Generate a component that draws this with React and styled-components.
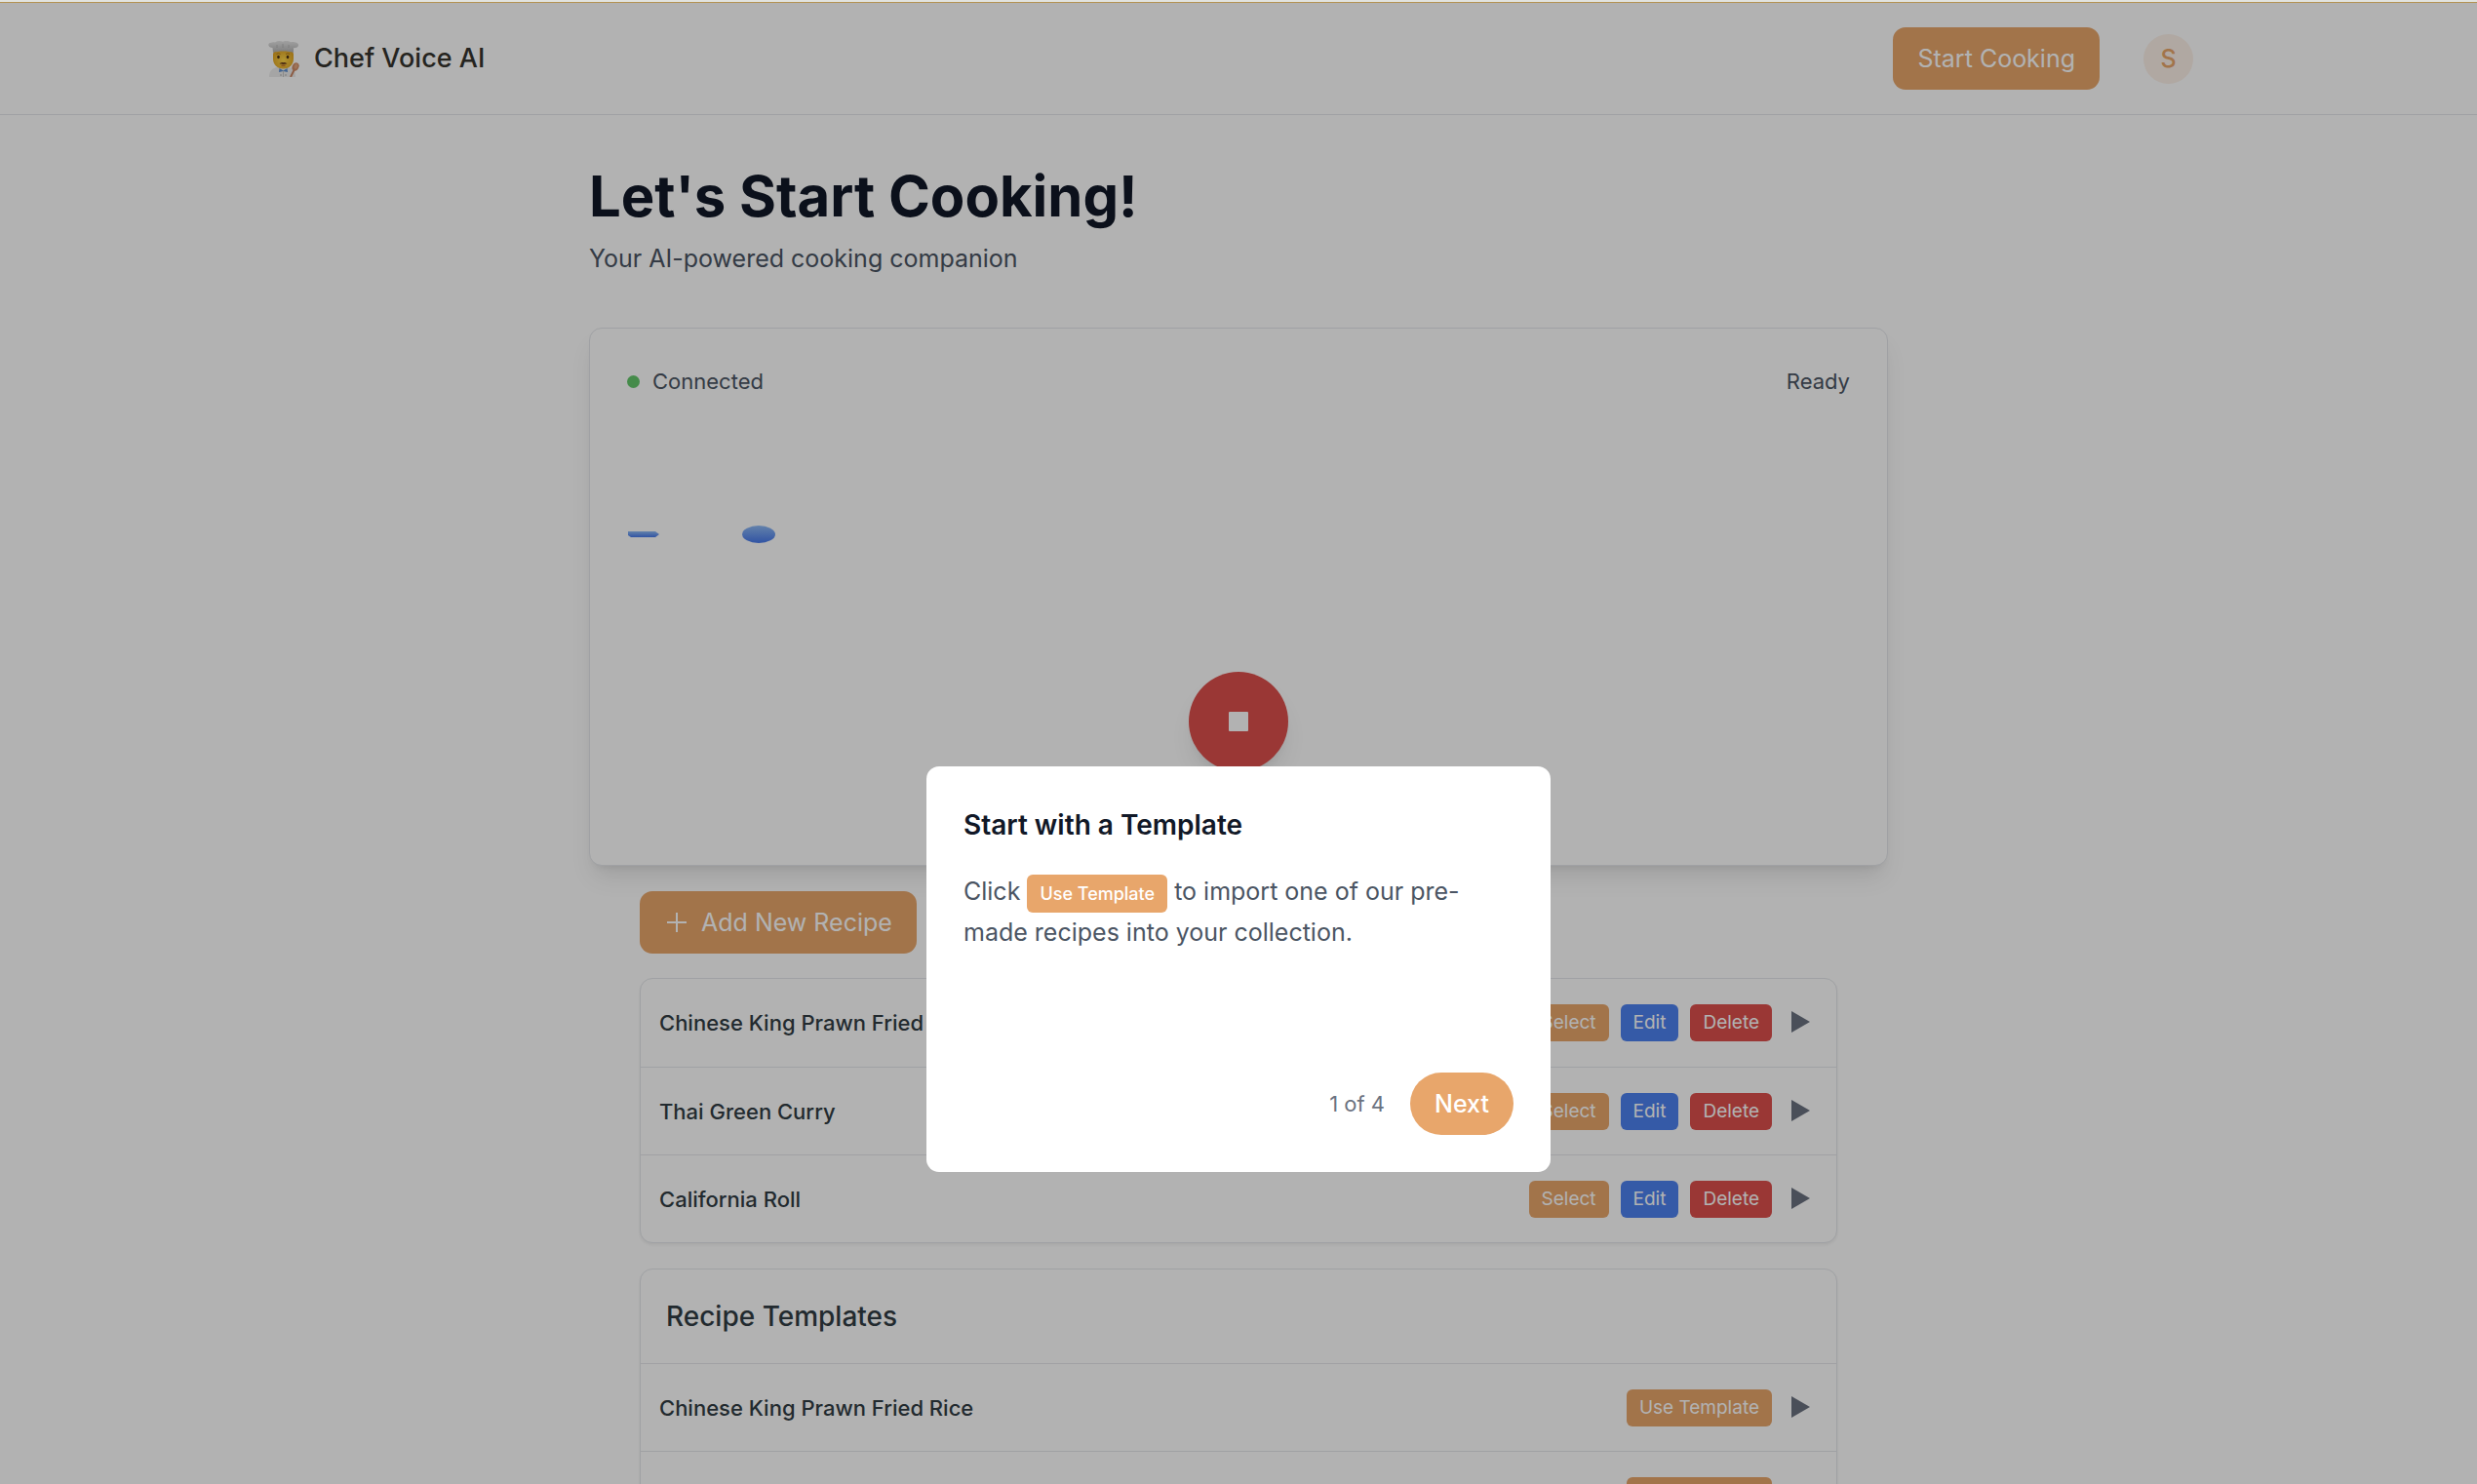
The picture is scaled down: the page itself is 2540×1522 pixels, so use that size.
import React from 'react';
import styled, { createGlobalStyle } from 'styled-components';

const GlobalStyle = createGlobalStyle`
  * {
    box-sizing: border-box;
  }
  body {
    margin: 0;
    background: #fff;
    color: #323d44;
    font-family: Inter, "Liberation Sans", sans-serif;
    font-size: 25px;
    line-height: 38px;
  }
  button {
    border: 0;
    margin: 0;
    font-family: inherit;
    cursor: pointer;
  }
  h1, h2, p, ul {
    margin: 0;
    padding: 0;
  }
`
const Page = styled.div`
  position: relative;
  height: 100vh;
  overflow: hidden;
`
const TopStrip = styled.div`
  position: relative;
  z-index: 20;
  height: 3px;
  background: #e1e3df;
  border-bottom: 1px solid #b39253;
`
const Header = styled.header`
  height: 115px;
  border-bottom: 1px solid #e5e7eb;
`
const HeaderInner = styled.div`
  max-width: 2048px;
  height: 100%;
  margin: 0 auto;
  padding: 0 45px 0 28px;
  display: flex;
  align-items: center;
  justify-content: space-between;
`
const Brand = styled.a`
  display: flex;
  align-items: center;
  gap: 15px;
  font-size: 27px;
  font-weight: 500;
  color: #35342e;
  text-decoration: none;
`
const HeaderActions = styled.div`
  display: flex;
  align-items: center;
  gap: 45px;
`
const Button = styled.button`
  display: inline-flex;
  align-items: center;
  justify-content: center;
  gap: 12px;
  height: 64px;
  padding: 0 25px;
  border-radius: ${props => props.$round ? '32px' : '13px'};
  background: #e8a66b;
  color: #fff;
  font-size: 25px;
  font-weight: ${props => props.$round ? 500 : 400};
`
const Avatar = styled.button`
  width: 51px;
  height: 51px;
  padding: 0;
  border-radius: 50%;
  background: #fdf1e8;
  color: #e8a66b;
  font-size: 25px;
  font-weight: 500;
`
const Main = styled.main`
  max-width: 1332px;
  margin: 0 auto;
  padding-top: 51px;
`
const Title = styled.h1`
  font-size: 58px;
  line-height: 64px;
  font-weight: 700;
  color: #111827;
`
const Subtitle = styled.p`
  margin-top: 13px;
  color: #4b5563;
`
const VoiceCard = styled.section`
  margin-top: 52px;
  padding: 38px 38px 96px;
  border: 1px solid #e5e7eb;
  border-radius: 13px;
  background: #fff;
  box-shadow: 0 16px 24px -5px rgba(0, 0, 0, 0.1), 0 6px 10px -6px rgba(0, 0, 0, 0.1);
  display: flex;
  flex-direction: column;
`
const StatusRow = styled.div`
  display: flex;
  justify-content: space-between;
  font-size: 22px;
  line-height: 32px;
  color: #4b5563;
`
const Status = styled.span`
  display: flex;
  align-items: center;
  gap: 13px;
`
const Dot = styled.span`
  width: 13px;
  height: 13px;
  border-radius: 50%;
  background: #64c86b;
`
const Wave = styled.svg`
  display: block;
  width: 100%;
  height: 230px;
  margin: 26px 0;
`
const StopButton = styled.button`
  width: 102px;
  height: 102px;
  padding: 0;
  align-self: center;
  display: flex;
  align-items: center;
  justify-content: center;
  border-radius: 50%;
  background: #dd504c;
  box-shadow: 0 16px 24px -5px rgba(0, 0, 0, 0.1), 0 6px 10px -6px rgba(0, 0, 0, 0.1);
`
const StopIcon = styled.span`
  width: 20px;
  height: 20px;
  border-radius: 1px;
  background: #fff;
`
const Recipes = styled.section`
  padding: 26px 52px 0;
`
const List = styled.ul`
  margin-top: ${props => props.$gap}px;
  list-style: none;
  border: 1px solid #e5e7eb;
  border-radius: 13px;
  background: #fff;
  box-shadow: 0 2px 3px rgba(0, 0, 0, 0.06);
`
const ListTitle = styled.li`
  height: 96px;
  padding: 0 26px;
  display: flex;
  align-items: center;

  h2 {
    font-size: 28px;
    font-weight: 500;
  }
`
const Row = styled.li`
  height: 90px;
  padding: 0 19px;
  display: flex;
  align-items: center;
  justify-content: space-between;

  & + & , ${ListTitle} + & {
    border-top: 1px solid #e5e7eb;
  }
`
const RecipeName = styled.span`
  font-size: 22px;
  font-weight: 500;
`
const RowActions = styled.div`
  display: flex;
  align-items: center;
  gap: 12px;
`
const colors = {
  orange: '#e8a66b',
  blue: '#4d81f0',
  red: '#dd504c',
}
const SmallButton = styled.button`
  height: 38px;
  padding: 0 13px;
  border-radius: 6px;
  background: ${props => colors[props.$color]};
  color: #fff;
  font-size: 19px;
  line-height: 38px;
`
const ExpandButton = styled.button`
  padding: 0 8px;
  background: none;

  svg {
    display: block;
  }
`
const Overlay = styled.div`
  position: fixed;
  inset: 0;
  z-index: 10;
  display: flex;
  justify-content: center;
  align-items: flex-start;
  background: rgba(0, 0, 0, 0.3);
`
const Dialog = styled.div`
  width: 640px;
  min-height: 416px;
  margin-top: 786px;
  padding: 38px;
  display: flex;
  flex-direction: column;
  border-radius: 13px;
  background: #fff;
`
const DialogTitle = styled.h2`
  font-size: 28px;
  line-height: 44px;
  font-weight: 600;
  color: #111827;
`
const DialogText = styled.p`
  margin-top: 26px;
  line-height: 41px;
  color: #4b5563;
`
const Tag = styled.span`
  display: inline-block;
  height: 39px;
  padding: 0 13px;
  border-radius: 6px;
  background: #e8a66b;
  color: #fff;
  font-size: 18px;
  line-height: 39px;
  font-weight: 500;
  vertical-align: middle;
`
const DialogFooter = styled.div`
  margin-top: auto;
  display: flex;
  align-items: center;
  justify-content: flex-end;
  gap: 26px;
`
const Step = styled.span`
  font-size: 22px;
  color: #6b7280;
`

const ChefIcon = () => (
  <svg width="33" height="37" viewBox="0 0 33 37" aria-hidden="true">
    <defs>
      <linearGradient id="hat" x1="0" y1="0" x2="0" y2="1">
        <stop offset="0" stopColor="#e6e6e6" />
        <stop offset="1" stopColor="#b4b4b4" />
      </linearGradient>
      <radialGradient id="face" cx="0.5" cy="0.55" r="0.6">
        <stop offset="0" stopColor="#ffd84a" />
        <stop offset="1" stopColor="#e0a222" />
      </radialGradient>
    </defs>
    <path d="M2 37c0-6 3-9 8-10h12c5 1 7 4 7 10z" fill="#ececec" />
    <path d="M6 14c0-3 2-5 10.500-5S27 11 27 14v4c0 6-4 10.500-10.500 10.500S6 24 6 18z" fill="url(#face)" />
    <path d="M12.500 28l4 2.500 4-2.500.5 4-4.500-1-4.500 1z" fill="#5d8fd0" />
    <path d="M16.500 31v6" stroke="#c8c8c8" />
    <circle cx="14" cy="35" r="0.700" fill="#999" />
    <circle cx="19" cy="35" r="0.700" fill="#999" />
    <ellipse cx="11.500" cy="16.500" rx="1.300" ry="1.800" fill="#4a2f14" />
    <ellipse cx="21" cy="16.500" rx="1.300" ry="1.800" fill="#4a2f14" />
    <path d="M9.500 13.500q2-1.500 4 0M19 13.500q2-1.500 4 0" stroke="#b07c20" fill="none" />
    <path d="M12.500 23c1.500-.5 2.500-1.500 4-.8 1.500-.7 2.500.3 4 .8-1.500 1.200-6.500 1.200-8 0z" fill="#6b3f1c" />
    <path d="M14.500 25.200h4" stroke="#b5562c" />
    <path d="M6 12L5.500 7C1 7 0 3 3 2c2-1 4-1 5-.5C11-.5 14 0 16 .800c3-1.500 6-1 8 .4 4-.5 8 .8 8 3 0 2-2 3-5 3L27 12c-6-2-15-2-21 0z" fill="url(#hat)" />
    <path d="M10 4v3M16 3v4M22 4v3" stroke="#adadad" strokeWidth="0.800" />
    <path d="M28 29l-4 8" stroke="#c98562" strokeWidth="2" />
    <ellipse cx="29" cy="26.500" rx="3.300" ry="4.300" transform="rotate(25 29 26.500)" fill="#d08c66" />
    <ellipse cx="29.500" cy="26" rx="1.800" ry="2.700" transform="rotate(25 29.500 26)" fill="#e2a680" />
  </svg>
)

const PlusIcon = () => (
  <svg width="26" height="26" viewBox="0 0 26 26" aria-hidden="true">
    <path d="M13 3v20M3 13h20" stroke="currentColor" strokeWidth="2" />
  </svg>
)

function Expand({ name }) {
  return (
    <ExpandButton aria-label={'Show ' + name}>
      <svg width="19" height="26" viewBox="0 0 19 26" aria-hidden="true">
        <path d="M0 1v22l19-11z" fill="#6b7280" />
      </svg>
    </ExpandButton>
  )
}

const recipes = ['Chinese King Prawn Fried Rice', 'Thai Green Curry', 'California Roll'];

function App() {

  return (
    <Page>
      <GlobalStyle />
      <TopStrip />
      <Header>
        <HeaderInner>
          <Brand href="#">
            <ChefIcon />
            Chef Voice AI
          </Brand>
          <HeaderActions>
            <Button>Start Cooking</Button>
            <Avatar aria-label="Account">S</Avatar>
          </HeaderActions>
        </HeaderInner>
      </Header>

      <Main>
        <Title>Let's Start Cooking!</Title>
        <Subtitle>Your AI-powered cooking companion</Subtitle>

        <VoiceCard>
          <StatusRow>
            <Status><Dot />Connected</Status>
            <span>Ready</span>
          </StatusRow>
          <Wave aria-hidden="true">
            <defs>
              <linearGradient id="wave" x1="0" y1="0" x2="0" y2="1">
                <stop offset="0" stopColor="#8fbaf5" />
                <stop offset="1" stopColor="#4678ea" />
              </linearGradient>
            </defs>
            <path d="M1 112h28l4 3-4 3H4l-3-2z" fill="url(#wave)" />
            <ellipse cx="135" cy="115" rx="17" ry="9" fill="url(#wave)" />
          </Wave>
          <StopButton aria-label="Stop"><StopIcon /></StopButton>
        </VoiceCard>

        <Recipes>
          <Button><PlusIcon />Add New Recipe</Button>
          <List $gap={25}>
            {recipes.map(name => (
              <Row key={name}>
                <RecipeName>{name}</RecipeName>
                <RowActions>
                  <SmallButton $color="orange">Select</SmallButton>
                  <SmallButton $color="blue">Edit</SmallButton>
                  <SmallButton $color="red">Delete</SmallButton>
                  <Expand name={name} />
                </RowActions>
              </Row>
            ))}
          </List>
          <List $gap={26}>
            <ListTitle><h2>Recipe Templates</h2></ListTitle>
            {recipes.map(name => (
              <Row key={name}>
                <RecipeName>{name}</RecipeName>
                <RowActions>
                  <SmallButton $color="orange">Use Template</SmallButton>
                  <Expand name={name} />
                </RowActions>
              </Row>
            ))}
          </List>
        </Recipes>
      </Main>

      <Overlay>
        <Dialog role="dialog" aria-labelledby="tour-title">
          <DialogTitle id="tour-title">Start with a Template</DialogTitle>
          <DialogText>
            Click <Tag>Use Template</Tag> to import one of our pre-made recipes into your collection.
          </DialogText>
          <DialogFooter>
            <Step>1 of 4</Step>
            <Button $round>Next</Button>
          </DialogFooter>
        </Dialog>
      </Overlay>
    </Page>
  )
}

export default App
